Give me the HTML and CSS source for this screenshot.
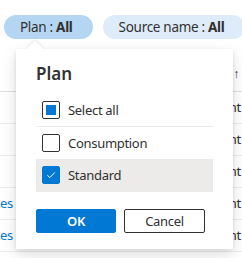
FILE: index.html
```html
<!DOCTYPE html>
<html lang="en">
<head>
    <meta charset="UTF-8">
    <meta name="viewport" content="width=device-width, initial-scale=1.0">
    <title>Plan filter</title>
    <link rel="stylesheet" href="styles.css">
</head>
<body>
    <div class="filters">
        <button class="pill pill-active">Plan : <b>All</b></button>
        <button class="pill">Source name : <b>All</b></button>
    </div>

    <div class="grid">
        <div class="row row-head"><span class="cell-left"></span><span class="cell-right arrow">↑</span></div>
        <div class="row"><span class="cell-left"></span><span class="cell-right">ent</span></div>
        <div class="row"><span class="cell-left"></span><span class="cell-right">ent</span></div>
        <div class="row"><span class="cell-left"></span><span class="cell-right">ent</span></div>
        <div class="row"><span class="cell-left link">es</span><span class="cell-right">ent</span></div>
        <div class="row"><span class="cell-left link">es</span><span class="cell-right">ent</span></div>
    </div>

    <div class="callout">
        <div class="beak"></div>
        <div class="callout-body">
            <h2 class="callout-title">Plan</h2>
            <div class="options">
                <label class="option option-all">
                    <span class="check check-mixed"></span>
                    <span>Select all</span>
                </label>
                <label class="option">
                    <span class="check"></span>
                    <span>Consumption</span>
                </label>
                <label class="option option-hover">
                    <span class="check check-on">
                        <svg width="12" height="12" viewBox="0 0 12 12"><path d="M2.3 6.2 L4.8 8.6 L9.8 3.5" fill="none" stroke="#fff" stroke-width="1"/></svg>
                    </span>
                    <span>Standard</span>
                </label>
            </div>
            <div class="actions">
                <button class="btn btn-primary">OK</button>
                <button class="btn">Cancel</button>
            </div>
        </div>
    </div>
</body>
</html>
```

FILE: styles.css
```css
:root {
    --text: #323130;
    --blue: #0078d4;
    --line: #edebe9;
}

body {
    margin: 0;
    width: 242px;
    height: 258px;
    overflow: hidden;
    position: relative;
    background: #ffffff;
    font-family: "Segoe UI", "Noto Sans", sans-serif;
    font-size: 13px;
    letter-spacing: -0.3px;
    color: var(--text);
}

.filters {
    display: flex;
    gap: 10px;
    padding: 15px 0 0 4px;
    white-space: nowrap;
}

.pill {
    height: 24px;
    padding: 0 20px 0 16px;
    border: none;
    border-radius: 12px;
    background: #deecf9;
    font-family: inherit;
    font-size: 13.5px;
    letter-spacing: -0.3px;
    color: var(--text);
    flex-shrink: 0;
}

.pill b {
    font-weight: 700;
}

.pill-active {
    background: #b4d6f3;
}

.grid {
    margin-top: 21px;
}

.row {
    height: 31px;
    border-bottom: 1px solid var(--line);
    display: flex;
    justify-content: space-between;
    align-items: center;
    line-height: 1;
}

.row-head {
    border-bottom-color: #e1dfdd;
}

.cell-left {
    padding-bottom: 1px;
}

.cell-right {
    padding-right: 1px;
    padding-bottom: 1px;
}

.arrow {
    font-size: 12px;
    padding-right: 3px;
    padding-bottom: 4px;
}

.link {
    color: var(--blue);
}

.callout {
    position: absolute;
    left: 16px;
    top: 49px;
    width: 217px;
    height: 200px;
    background: #ffffff;
    box-shadow: 0 6.4px 14.4px rgba(0, 0, 0, 0.13), 0 1.2px 3.6px rgba(0, 0, 0, 0.11);
}

.beak {
    position: absolute;
    left: 13px;
    top: -6px;
    width: 12px;
    height: 12px;
    background: #ffffff;
    transform: rotate(45deg);
    box-shadow: -1px -1px 3px rgba(0, 0, 0, 0.08);
}

.callout-body {
    position: relative;
    background: #ffffff;
    height: 100%;
    padding: 14px 20px 0 20px;
    box-sizing: border-box;
}

.callout-title {
    margin: 0 0 9px 0;
    font-size: 17px;
    font-weight: 600;
    line-height: 22px;
    letter-spacing: 0;
}

.options {
    display: flex;
    flex-direction: column;
    border-bottom: 1px solid var(--line);
}

.option {
    height: 32px;
    display: flex;
    align-items: center;
    gap: 8px;
    padding-left: 6px;
}

.option-all {
    border-bottom: 1px solid var(--line);
}

.option-hover {
    background: #edebe9;
}

.check {
    width: 18px;
    height: 18px;
    box-sizing: border-box;
    border: 1px solid var(--text);
    border-radius: 2px;
    display: flex;
    align-items: center;
    justify-content: center;
    background: #ffffff;
}

.check-mixed::after {
    content: "";
    width: 10px;
    height: 10px;
    background: var(--blue);
}

.check-on {
    background: var(--blue);
    border-color: var(--blue);
}

.actions {
    display: flex;
    gap: 8px;
    margin-top: 17px;
}

.btn {
    width: 80px;
    height: 24px;
    border: 1px solid #323130;
    border-radius: 2px;
    background: #ffffff;
    font-family: inherit;
    font-size: 13px;
    letter-spacing: -0.3px;
    font-weight: 400;
    color: var(--text);
}

.btn + .btn {
    width: 81px;
}

.btn-primary {
    background: var(--blue);
    border-color: var(--blue);
    color: #ffffff;
    font-weight: 600;
}
```
